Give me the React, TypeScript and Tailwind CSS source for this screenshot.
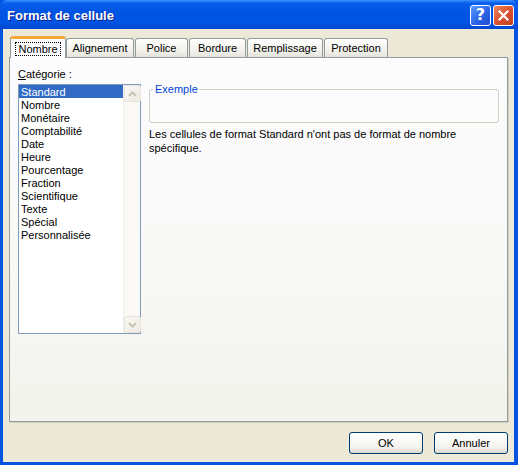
const categories = [
  'Standard',
  'Nombre',
  'Monétaire',
  'Comptabilité',
  'Date',
  'Heure',
  'Pourcentage',
  'Fraction',
  'Scientifique',
  'Texte',
  'Spécial',
  'Personnalisée',
];

const tabs = [
  { label: 'Alignement', w: 'w-[68px]', ml: 'ml-0' },
  { label: 'Police', w: 'w-[53px]', ml: 'ml-[1px]' },
  { label: 'Bordure', w: 'w-[57px]', ml: 'ml-[1px]' },
  { label: 'Remplissage', w: 'w-[76px]', ml: 'ml-[1px]' },
  { label: 'Protection', w: 'w-[64px]', ml: 'ml-[1px]' },
];

function TitleBar() {
  return (
    <div className="h-[29px] shrink-0 flex items-center justify-between pl-[7px] pr-[4px] rounded-t-[7px] bg-[linear-gradient(#3D95FF_0px,#0A5EEC_3px,#0054E3_12px,#0055E5_22px,#0046CF_29px)]">
      <span className="text-white font-bold text-[13px] leading-[16px] pt-[2px] font-['Liberation_Sans',Arial,sans-serif] [text-shadow:1px_1px_0_#0F1F8A]">
        Format de cellule
      </span>
      <div className="flex gap-[2px] pt-[1px]">
        <div className="w-[21px] h-[21px] rounded-[3px] border border-white bg-[linear-gradient(135deg,#5B9BFF,#2A64E6_55%,#1E4FD0)] flex items-center justify-center">
          <span className="text-white font-bold text-[16px] leading-none font-['DejaVu_Sans',sans-serif]">?</span>
        </div>
        <div className="w-[21px] h-[21px] rounded-[3px] border border-white bg-[linear-gradient(135deg,#EF8462,#D8512B_55%,#C2401F)] flex items-center justify-center">
          <svg width="11" height="11" viewBox="0 0 11 11">
            <path d="M1.5 1.5 L9.5 9.5 M9.5 1.5 L1.5 9.5" stroke="white" strokeWidth="2.2" strokeLinecap="square" />
          </svg>
        </div>
      </div>
    </div>
  );
}

function Chevron({ up }: { up?: boolean }) {
  return (
    <svg width="9" height="6" viewBox="0 0 9 6">
      <path
        d={up ? 'M1 5 L4.5 1.5 L8 5' : 'M1 1 L4.5 4.5 L8 1'}
        stroke="#C6C3B5"
        strokeWidth="2"
        fill="none"
      />
    </svg>
  );
}

function ScrollButton({ up }: { up?: boolean }) {
  return (
    <div className="w-[17px] h-[17px] rounded-[2px] border border-[#E6E4DC] bg-[linear-gradient(135deg,#F9F8F3,#ECEAE1)] flex items-center justify-center">
      <Chevron up={up} />
    </div>
  );
}

function ListBox() {
  return (
    <div className="w-[123px] h-[250px] border border-[#7F9DB9] bg-white flex">
      <div className="flex-1 flex flex-col">
        {categories.map((c, i) => (
          <div
            key={c}
            className={`h-[13px] leading-[14px] pl-[2px] ${i === 0 ? 'bg-[#316AC5] text-white' : ''}`}
          >
            {c}
          </div>
        ))}
      </div>
      <div className="w-[17px] flex flex-col justify-between bg-[#FAF9F5] border-l border-[#F1F0EA]">
        <ScrollButton up />
        <ScrollButton />
      </div>
    </div>
  );
}

export default function App() {
  return (
    <div className="w-[518px] h-[465px] flex flex-col bg-[#0553E1] font-['Liberation_Sans',Arial,sans-serif] text-[11px] text-black select-none">
      <TitleBar />
      <div className="flex-1 ml-[3px] mr-[4px] mb-[3px] bg-[#ECE9D8] flex flex-col pt-[7px] px-[6px]">
        <div className="h-[21px] flex items-end relative z-10">
          <div className="ml-[1px] w-[56px] h-[22px] -mb-px rounded-t-[3px] border-x border-[#919B9C] border-t-[3px] border-t-[#F7A93A] bg-[#FCFCFE] flex items-center justify-center">
            <span className="border border-dotted border-black px-[2px] leading-[12px]">Nombre</span>
          </div>
          {tabs.map((t) => (
            <div
              key={t.label}
              className={`${t.w} ${t.ml} h-[19px] rounded-t-[3px] border border-b-0 border-[#919B9C] bg-[linear-gradient(#FFFFFF,#F3F2EC_60%,#E5E4DC)] flex items-center justify-center leading-[13px]`}
            >
              {t.label}
            </div>
          ))}
        </div>
        <div className="h-[365px] border border-[#919B9C] shadow-[1px_1px_0_#D0CEBF] bg-[linear-gradient(#FCFCFE,#F8F8F6_60%,#F3F2EC)] flex pt-[10px] pl-[8px]">
          <div className="flex flex-col">
            <div className="leading-[13px] mb-[3px]">
              <span className="underline">C</span>atégorie :
            </div>
            <ListBox />
          </div>
          <div className="ml-[8px] flex flex-col">
            <fieldset className="mt-[15px] w-[350px] border border-[#D0D0BF] rounded-[3px] pl-[4px]">
              <legend className="px-[1px] leading-[13px] text-[#0046D5]">Exemple</legend>
              <div className="h-[26px]" />
            </fieldset>
            <p className="mt-[4px] w-[345px] leading-[14px]">
              Les cellules de format Standard n'ont pas de format de nombre spécifique.
            </p>
          </div>
        </div>
        <div className="mt-[10px] flex justify-end gap-[11px]">
          {['OK', 'Annuler'].map((b) => (
            <div
              key={b}
              className="w-[74px] h-[22px] rounded-[3px] border border-[#003C74] bg-[linear-gradient(#FFFFFF,#F4F3EE_70%,#DCD9CD)] flex items-center justify-center"
            >
              {b}
            </div>
          ))}
        </div>
      </div>
    </div>
  );
}
